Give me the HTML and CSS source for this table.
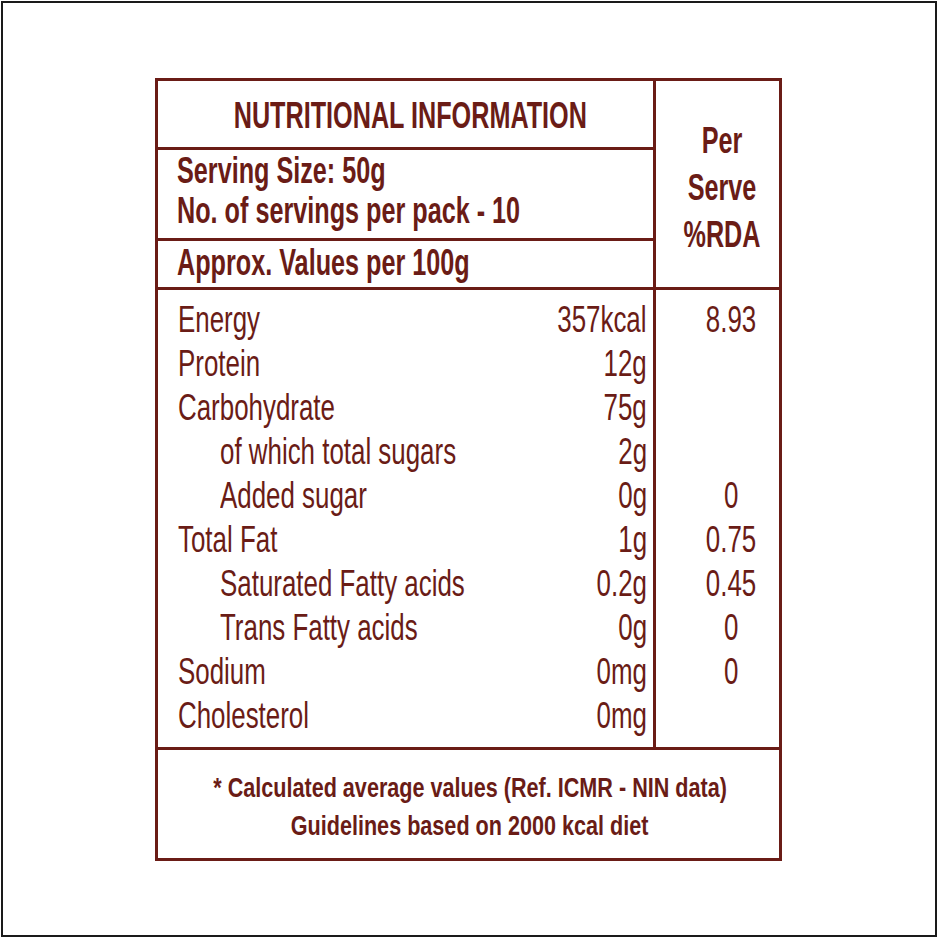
FILE: index.html
```html
<!DOCTYPE html>
<html lang="en">
<head>
<meta charset="utf-8">
<title>Nutritional Information</title>
<link rel="stylesheet" href="styles.css">
</head>
<body>
<div class="frame">
  <div class="label">
    <div class="head">
      <div class="head-left">
        <div class="title"><span class="sx c">NUTRITIONAL INFORMATION</span></div>
        <div class="serving">
          <div class="line"><span class="sx">Serving Size: 50g</span></div>
          <div class="line"><span class="sx">No. of servings per pack - 10</span></div>
        </div>
        <div class="approx"><span class="sx">Approx. Values per 100g</span></div>
      </div>
      <div class="head-right">
        <div class="hr-line"><span class="sx c">Per</span></div>
        <div class="hr-line"><span class="sx c">Serve</span></div>
        <div class="hr-line"><span class="sx c">%RDA</span></div>
      </div>
    </div>
    <div class="body">
      <div class="body-left">
        <div class="row"><span class="sx">Energy</span><span class="sx r">357kcal</span></div>
        <div class="row"><span class="sx">Protein</span><span class="sx r">12g</span></div>
        <div class="row"><span class="sx">Carbohydrate</span><span class="sx r">75g</span></div>
        <div class="row sub"><span class="sx">of which total sugars</span><span class="sx r">2g</span></div>
        <div class="row sub"><span class="sx">Added sugar</span><span class="sx r">0g</span></div>
        <div class="row"><span class="sx">Total Fat</span><span class="sx r">1g</span></div>
        <div class="row sub"><span class="sx">Saturated Fatty acids</span><span class="sx r">0.2g</span></div>
        <div class="row sub"><span class="sx">Trans Fatty acids</span><span class="sx r">0g</span></div>
        <div class="row"><span class="sx">Sodium</span><span class="sx r">0mg</span></div>
        <div class="row"><span class="sx">Cholesterol</span><span class="sx r">0mg</span></div>
      </div>
      <div class="body-right">
        <div class="rda"><span class="sx c">8.93</span></div>
        <div class="rda"></div>
        <div class="rda"></div>
        <div class="rda"></div>
        <div class="rda"><span class="sx c">0</span></div>
        <div class="rda"><span class="sx c">0.75</span></div>
        <div class="rda"><span class="sx c">0.45</span></div>
        <div class="rda"><span class="sx c">0</span></div>
        <div class="rda"><span class="sx c">0</span></div>
        <div class="rda"></div>
      </div>
    </div>
    <div class="foot">
      <div class="foot-line"><span class="fx">* Calculated average values (Ref. ICMR - NIN data)</span></div>
      <div class="foot-line"><span class="fx">Guidelines based on 2000 kcal diet</span></div>
    </div>
  </div>
</div>
</body>
</html>
```
FILE: styles.css
```css
* { box-sizing: border-box; margin: 0; padding: 0; }
html, body { background: #ffffff; }
body {
  font-family: "Liberation Sans", Arial, sans-serif;
  color: #6a1c16;
}
.frame {
  width: 936px;
  height: 936px;
  margin: 1px;
  border: 2px solid #1a1a1a;
  padding: 75px 0 0 152px;
}
.label {
  width: 627px;
  height: 783px;
  border: 3px solid #6a1c16;
  display: flex;
  flex-direction: column;
}
.sx {
  display: inline-block;
  white-space: nowrap;
  transform: scaleX(0.7);
  transform-origin: left center;
}
.sx.r { transform-origin: right center; }
.sx.c { transform-origin: center center; }

.head {
  display: flex;
  height: 209px;
  border-bottom: 3px solid #6a1c16;
  font-weight: bold;
  font-size: 36px;
}
.head-left {
  width: 495px;
  display: flex;
  flex-direction: column;
}
.title {
  height: 69px;
  border-bottom: 3px solid #6a1c16;
  padding-top: 17px;
  line-height: 36px;
  text-align: center;
}
.serving {
  height: 91px;
  border-bottom: 3px solid #6a1c16;
  padding: 1px 0 0 19px;
}
.serving .line { height: 40px; line-height: 40px; }
.approx {
  height: 46px;
  padding-left: 19px;
  line-height: 44px;
}
.head-right {
  flex: 1;
  border-left: 3px solid #6a1c16;
  padding: 36px 0 0 10px;
  text-align: center;
}
.hr-line { height: 47px; line-height: 47px; }

.body {
  display: flex;
  height: 460px;
  border-bottom: 3px solid #6a1c16;
  font-size: 37px;
}
.body-left {
  width: 495px;
  padding: 8px 6px 0 20px;
}
.row {
  display: flex;
  justify-content: space-between;
  height: 44px;
  line-height: 44px;
}
.row.sub { padding-left: 42px; }
.body-right {
  flex: 1;
  border-left: 3px solid #6a1c16;
  padding: 8px 0 0 27px;
  text-align: center;
}
.rda { height: 44px; line-height: 44px; }

.foot {
  flex: 1;
  padding: 19px 0 0 3px;
  font-weight: bold;
  font-size: 27px;
}
.foot-line {
  height: 38px;
  line-height: 38px;
  display: flex;
  justify-content: center;
}
.fx {
  display: inline-block;
  flex: none;
  white-space: nowrap;
  transform: scaleX(0.8);
  transform-origin: center center;
}
```
